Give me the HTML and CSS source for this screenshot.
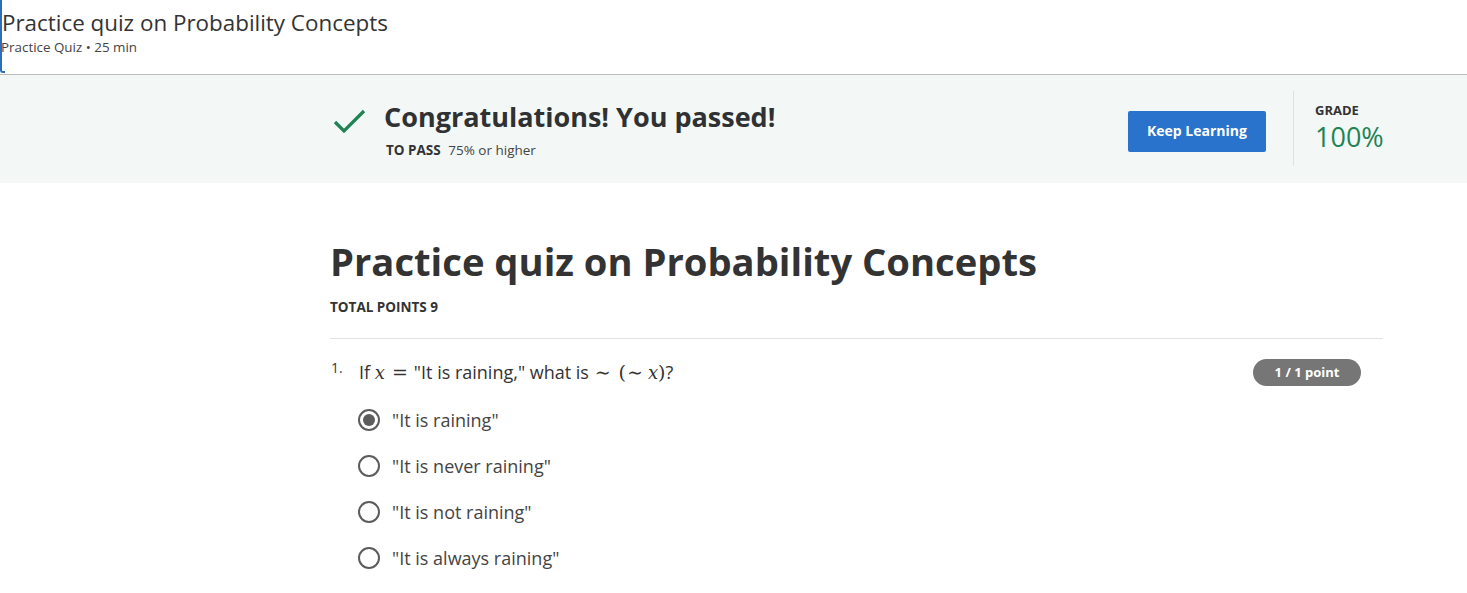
FILE: index.html
```html
<!DOCTYPE html>
<html>
<head>
<meta charset="utf-8">
<link rel="stylesheet" href="styles.css">
</head>
<body>
<header class="top">
  <div class="top-title">Practice quiz on Probability Concepts</div>
  <div class="top-sub">Practice Quiz • 25 min</div>
</header>
<section class="banner">
  <div class="banner-inner">
    <div class="pass">
      <svg class="check" width="34" height="26" viewBox="0 0 34 26"><path d="M2 13 L11 22 L31 2" fill="none" stroke="#1f8354" stroke-width="3.2"/></svg>
      <div class="pass-text">
        <div class="congrats">Congratulations! You passed!</div>
        <div class="to-pass"><b>TO PASS</b> 75% or higher</div>
      </div>
    </div>
    <div class="actions">
      <button class="keep">Keep Learning</button>
      <div class="vdiv"></div>
      <div class="grade">
        <div class="grade-label">GRADE</div>
        <div class="grade-val">100%</div>
      </div>
    </div>
  </div>
</section>
<main class="quiz">
  <h1 class="quiz-title">Practice quiz on Probability Concepts</h1>
  <div class="total">TOTAL POINTS 9</div>
  <div class="q">
    <div class="q-head">
      <span class="q-num">1.</span>
      <span class="q-text">If <span class="m">x</span><span class="mo rel">=</span>"It is raining," what is <span class="mo tl">∼</span><span class="mo op">(</span><span class="mo tl">∼</span><span class="m">x</span><span class="mo">)</span>?</span>
      <span class="badge">1 / 1 point</span>
    </div>
    <ul class="opts">
      <li class="opt"><span class="radio checked"></span>"It is raining"</li>
      <li class="opt"><span class="radio"></span>"It is never raining"</li>
      <li class="opt"><span class="radio"></span>"It is not raining"</li>
      <li class="opt"><span class="radio"></span>"It is always raining"</li>
    </ul>
  </div>
</main>
</body>
</html>
```
FILE: styles.css
```css
* { box-sizing: border-box; }
body {
  margin: 0;
  font-family: "Open Sans", "Noto Sans", sans-serif;
  color: #373a3c;
  background: #fff;
}
.top {
  height: 75px;
  border-bottom: 1px solid #bdbdbd;
  position: relative;
  padding: 8px 0 0 2px;
}
.top::before {
  content: "";
  position: absolute;
  left: 0; top: -4px; bottom: 1px;
  width: 3px;
  border: 2px solid #2a6fb8;
  border-top: none;
  border-right: none;
  border-radius: 0 0 0 3px;
}
.top-title {
  font-size: 22.4px;
  line-height: 30px;
  color: #333;
}
.top-sub {
  font-size: 13.4px;
  line-height: 18px;
  margin-top: 0;
  color: #444;
  margin-left: -1px;
}
.banner {
  background: #f3f8f7;
  height: 108px;
}
.banner-inner {
  width: 1053px;
  margin-left: 330px;
  display: flex;
  justify-content: space-between;
  align-items: flex-start;
  height: 100%;
}
.pass {
  display: flex;
  align-items: flex-start;
  padding-top: 25px;
}
.check { margin: 9px 0 0 3px; }
.pass-text { margin-left: 17px; }
.congrats {
  font-size: 27px;
  font-weight: 700;
  line-height: 34px;
  color: #2f3133;
}
.to-pass {
  font-size: 13.5px;
  margin-top: 7px;
  margin-left: 2px;
  color: #444;
}
.to-pass b { margin-right: 4px; color: #333; }
.actions {
  display: flex;
  align-items: flex-start;
  padding-top: 16px;
}
.keep {
  margin-top: 20px;
  width: 138px;
  height: 41px;
  padding: 0 0 2px;
  background: #2a73cc;
  color: #fff;
  border: none;
  border-radius: 2px;
  font-family: "Open Sans", sans-serif;
  font-weight: 700;
  font-size: 14px;
}
.vdiv {
  width: 1px;
  height: 75px;
  background: #dde2e2;
  margin-left: 27px;
}
.grade {
  margin-left: 21px;
  width: 68px;
  padding-top: 9px;
  white-space: nowrap;
}
.grade-label {
  font-size: 13px;
  font-weight: 700;
  color: #333;
  line-height: 18px;
  margin-top: 1px;
}
.grade-val {
  font-size: 27px;
  color: #1f8354;
  line-height: 36px;
}
.quiz {
  width: 1053px;
  margin-left: 330px;
  padding-top: 52px;
}
.quiz-title {
  margin: 0;
  font-size: 38.2px;
  font-weight: 700;
  line-height: 52px;
  color: #333;
}
.total {
  margin-top: 11px;
  font-size: 13.5px;
  font-weight: 700;
  color: #333;
  padding-bottom: 22px;
  border-bottom: 1px solid #e1e1e1;
}
.q { padding-top: 19px; }
.q-head {
  display: flex;
  align-items: center;
  height: 28px;
}
.q-num {
  font-size: 14px;
  width: 29px;
  padding-left: 1px;
  align-self: flex-start;
  margin-top: 0;
}
.q-text {
  font-size: 18px;
  color: #333;
  flex: 1;
}
.m {
  font-family: "DejaVu Serif", "Liberation Serif", serif;
  font-style: italic;
  font-size: 18px;
}
.mo {
  font-family: "DejaVu Serif", "Liberation Serif", serif;
  font-size: 19px;
}
.mo.rel { margin: 0 6px 0 7px; }
.mo.tl { margin-right: 5px; margin-left: 1px; }
.mo.op { margin-left: 3px; }
.badge {
  background: #767676;
  color: #fff;
  font-size: 13px;
  font-weight: 700;
  border-radius: 14px;
  height: 27px;
  line-height: 27px;
  width: 108px;
  text-align: center;
  margin-right: 22px;
}
.opts {
  list-style: none;
  margin: 0;
  padding: 11px 0 0 28px;
}
.opt {
  display: flex;
  align-items: center;
  height: 46px;
  font-size: 18px;
  color: #444;
}
.radio {
  width: 22px;
  height: 22px;
  border: 2px solid #5c5c5c;
  border-radius: 50%;
  margin-right: 12px;
  position: relative;
}
.radio.checked::after {
  content: "";
  position: absolute;
  left: 3px; top: 3px;
  width: 12px; height: 12px;
  border-radius: 50%;
  background: #5c5c5c;
}
```
